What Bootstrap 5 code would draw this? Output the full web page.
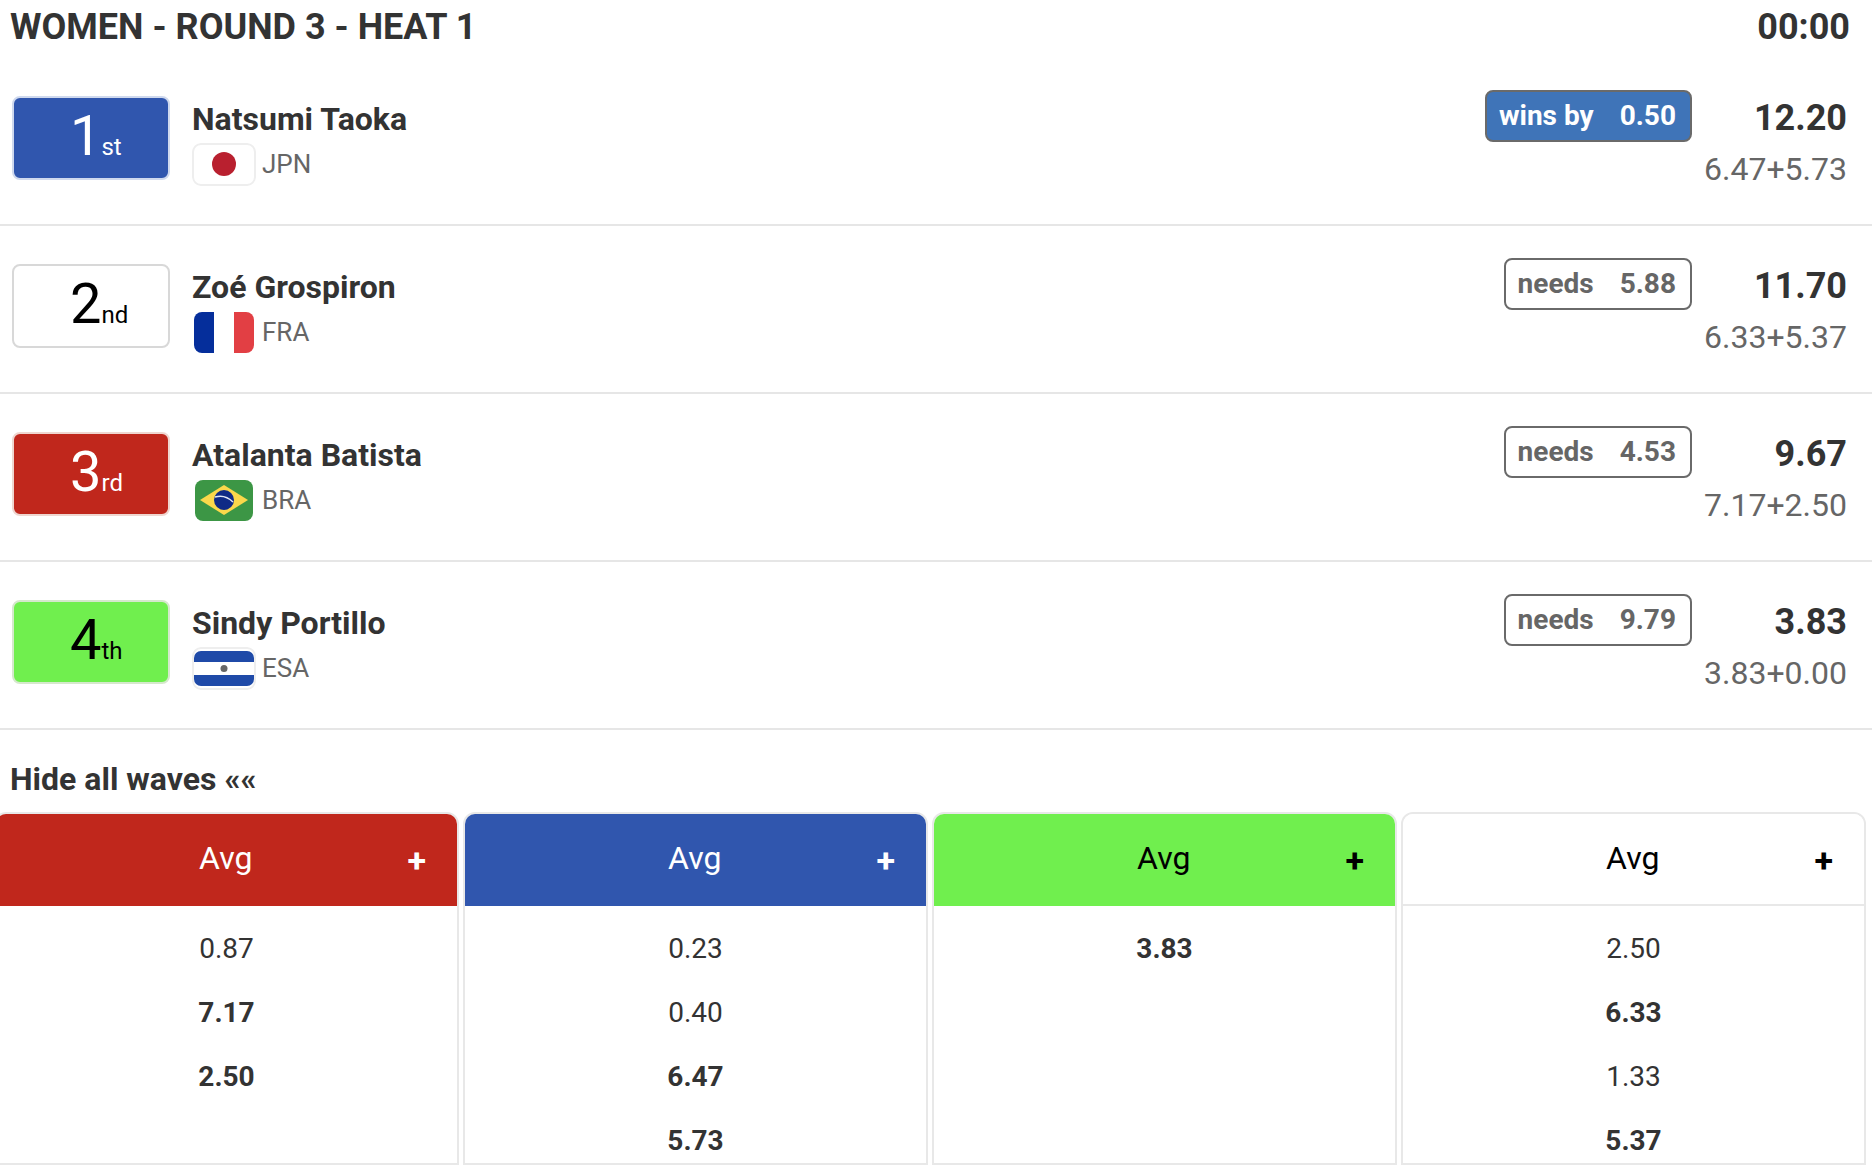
<!DOCTYPE html>
<html lang="en">
<head>
  <meta charset="UTF-8">
  <title>Women - Round 3 - Heat 1</title>
  <link href="https://cdn.jsdelivr.net/npm/bootstrap@5.3.0/dist/css/bootstrap.min.css" rel="stylesheet">
  <style>
    body { font-family: Roboto, "Liberation Sans", sans-serif; color: #333; background: #fff; overflow: hidden; }
    .heat-head { height: 58px; padding: 7px 22px 0 10px; font-size: 36px; line-height: 40px; font-weight: 700; }
    .list-group-flush > .heat-row.list-group-item { height: 168px; padding: 0 25px 0 12px; border-color: #e6e6e6; border-width: 0 0 2px; border-style: solid; color: #333; }
    .rank-box { width: 158px; height: 84px; margin-top: 38px; padding-left: 56px; border: 2px solid #d8d8d8; border-radius: 8px; font-size: 56px; line-height: 76px; }
    .rank-box sup { position: static; vertical-align: baseline; font-size: 24px; line-height: 1; }
    .rank-blue { background: #3056ae; border-color: #cfd9ee; color: #fff; }
    .rank-red { background: #c0271c; border-color: #efd6d0; color: #fff; }
    .rank-green { background: #70ef4e; border-color: #d5e8cc; color: #000; }
    .rank-white { background: #fff; color: #000; }
    .surfer { margin: 41px 0 0 22px; }
    .surfer-name { font-size: 32px; line-height: 40px; font-weight: 700; }
    .surfer-line { margin-top: 4px; gap: 6px; }
    .surfer-flag { width: 64px; height: 43px; display: block; border-radius: 8px; }
    .surfer-code { font-size: 26px; line-height: 43px; color: #666; }
    .gap-pill { margin: 32px 0 0 auto; height: 52px; padding: 0 14px 0 12px; border: 2px solid #6a6a6a; border-radius: 8px; font-size: 28px; line-height: 48px; font-weight: 700; color: #666; background: #fff; }
    .gap-pill b { margin-left: 26px; font-weight: 700; }
    .gap-win { background: #3f74b8; color: #fff; border-color: #6a6a6a; }
    .score-box { width: 155px; margin-top: 34px; text-align: right; }
    .score-total { font-size: 36px; line-height: 52px; font-weight: 700; }
    .score-sum { font-size: 32px; line-height: 50px; color: #666; }
    .waves-toggle { height: 82px; padding: 29px 0 0 10px; font-size: 32px; line-height: 40px; font-weight: 700; }
    .waves-grid { display: grid; grid-template-columns: repeat(4, 465px); column-gap: 4px; height: 353px; margin-left: -6px; }
    .wave-card.card { border: 2px solid #e8e8e8; border-radius: 12px 12px 0 0; height: 353px; overflow: hidden; color: #333; }
    .wave-top.card-header { flex: 0 0 92px; padding: 0 31px 4px 38px; border: 0; border-radius: 0; font-size: 32px; }
    .wave-top.top-red { background: #c0271c; color: #fff; }
    .wave-top.top-blue { background: #3056ae; color: #fff; }
    .wave-top.top-green { background: #70ef4e; color: #000; }
    .wave-top.top-white { background: #fff; color: #000; padding-bottom: 2px; border-bottom: 2px solid #e8e8e8; }
    .wave-label { flex: 1; text-align: center; padding-left: 10px; }
    .wave-plus { font-size: 34px; font-weight: 700; line-height: 1; padding-top: 4px; }
    .wave-score { height: 64px; line-height: 64px; text-align: center; font-size: 28px; }
    .wave-list { padding-top: 11px; }
  </style>
</head>
<body>
  <div class="heat-head d-flex justify-content-between">
    <span>WOMEN - ROUND 3 - HEAT 1</span>
    <span>00:00</span>
  </div>

  <div class="list-group list-group-flush">
    <div class="list-group-item heat-row d-flex">
      <div class="rank-box rank-blue">1<sup>st</sup></div>
      <div class="surfer">
        <div class="surfer-name">Natsumi Taoka</div>
        <div class="d-flex surfer-line">
          <svg class="surfer-flag" viewBox="0 0 64 43"><rect x="1" y="1" width="62" height="41" rx="8" fill="#fff" stroke="#eee" stroke-width="2"/><circle cx="32" cy="21" r="12" fill="#b9202f"/></svg>
          <span class="surfer-code">JPN</span>
        </div>
      </div>
      <div class="gap-pill gap-win">wins by<b>0.50</b></div>
      <div class="score-box"><div class="score-total">12.20</div><div class="score-sum">6.47+5.73</div></div>
    </div>

    <div class="list-group-item heat-row d-flex">
      <div class="rank-box rank-white">2<sup>nd</sup></div>
      <div class="surfer">
        <div class="surfer-name">Zoé Grospiron</div>
        <div class="d-flex surfer-line">
          <svg class="surfer-flag" viewBox="0 0 64 43"><clipPath id="fr"><rect x="2" y="1" width="60" height="41" rx="8"/></clipPath><g clip-path="url(#fr)"><rect x="2" y="1" width="20" height="41" fill="#052e9b"/><rect x="22" y="1" width="20" height="41" fill="#fff"/><rect x="42" y="1" width="20" height="41" fill="#e23f44"/></g></svg>
          <span class="surfer-code">FRA</span>
        </div>
      </div>
      <div class="gap-pill">needs<b>5.88</b></div>
      <div class="score-box"><div class="score-total">11.70</div><div class="score-sum">6.33+5.37</div></div>
    </div>

    <div class="list-group-item heat-row d-flex">
      <div class="rank-box rank-red">3<sup>rd</sup></div>
      <div class="surfer">
        <div class="surfer-name">Atalanta Batista</div>
        <div class="d-flex surfer-line">
          <svg class="surfer-flag" viewBox="0 0 64 43"><rect x="3" y="1" width="58" height="41" rx="8" fill="#3c9645"/><path d="M8 21 32 6l24 15-24 15z" fill="#fbd84b"/><circle cx="32" cy="21" r="10" fill="#0f2a86"/><path d="M23 18c7-2 13 0 18 5" fill="none" stroke="#dfe6f5" stroke-width="1.5"/></svg>
          <span class="surfer-code">BRA</span>
        </div>
      </div>
      <div class="gap-pill">needs<b>4.53</b></div>
      <div class="score-box"><div class="score-total">9.67</div><div class="score-sum">7.17+2.50</div></div>
    </div>

    <div class="list-group-item heat-row d-flex">
      <div class="rank-box rank-green">4<sup>th</sup></div>
      <div class="surfer">
        <div class="surfer-name">Sindy Portillo</div>
        <div class="d-flex surfer-line">
          <svg class="surfer-flag" viewBox="0 0 64 43"><rect x="1" y="1" width="62" height="41" rx="8" fill="#fff" stroke="#eee" stroke-width="2"/><path d="M2 11a7 7 0 0 1 7-7h46a7 7 0 0 1 7 7v4H2z" fill="#1f4aa8"/><path d="M2 28h60v4a7 7 0 0 1-7 7H9a7 7 0 0 1-7-7z" fill="#1f4aa8"/><circle cx="32" cy="21.500" r="3.500" fill="#666"/></svg>
          <span class="surfer-code">ESA</span>
        </div>
      </div>
      <div class="gap-pill">needs<b>9.79</b></div>
      <div class="score-box"><div class="score-total">3.83</div><div class="score-sum">3.83+0.00</div></div>
    </div>
  </div>

  <div class="waves-toggle">Hide all waves ««</div>

  <div class="waves-grid">
    <div class="card wave-card">
      <div class="card-header wave-top top-red d-flex align-items-center"><span class="wave-label">Avg</span><span class="wave-plus">+</span></div>
      <div class="wave-list">
        <div class="wave-score">0.87</div>
        <div class="wave-score fw-bold">7.17</div>
        <div class="wave-score fw-bold">2.50</div>
      </div>
    </div>
    <div class="card wave-card">
      <div class="card-header wave-top top-blue d-flex align-items-center"><span class="wave-label">Avg</span><span class="wave-plus">+</span></div>
      <div class="wave-list">
        <div class="wave-score">0.23</div>
        <div class="wave-score">0.40</div>
        <div class="wave-score fw-bold">6.47</div>
        <div class="wave-score fw-bold">5.73</div>
      </div>
    </div>
    <div class="card wave-card">
      <div class="card-header wave-top top-green d-flex align-items-center"><span class="wave-label">Avg</span><span class="wave-plus">+</span></div>
      <div class="wave-list">
        <div class="wave-score fw-bold">3.83</div>
      </div>
    </div>
    <div class="card wave-card">
      <div class="card-header wave-top top-white d-flex align-items-center"><span class="wave-label">Avg</span><span class="wave-plus">+</span></div>
      <div class="wave-list">
        <div class="wave-score">2.50</div>
        <div class="wave-score fw-bold">6.33</div>
        <div class="wave-score">1.33</div>
        <div class="wave-score fw-bold">5.37</div>
      </div>
    </div>
  </div>
</body>
</html>
